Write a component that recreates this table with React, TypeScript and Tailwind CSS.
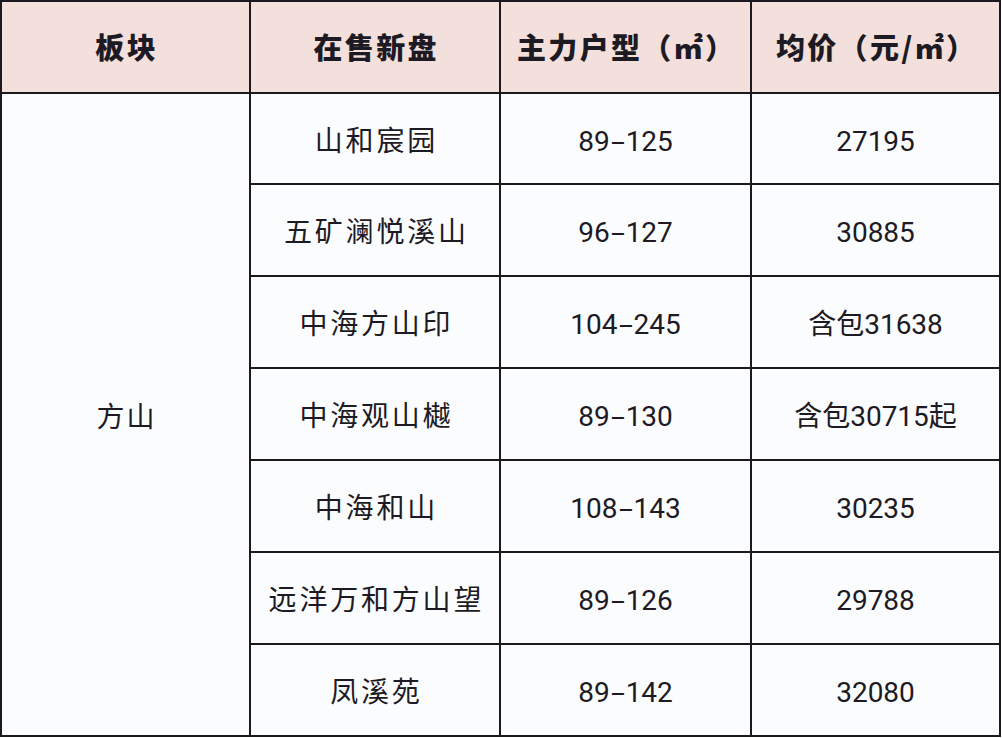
import React from "react";

const rows = [
  { name: "山和宸园", area: "89-125", price: "27195" },
  { name: "五矿澜悦溪山", area: "96-127", price: "30885" },
  { name: "中海方山印", area: "104-245", price: "含包31638" },
  { name: "中海观山樾", area: "89-130", price: "含包30715起" },
  { name: "中海和山", area: "108-143", price: "30235" },
  { name: "远洋万和方山望", area: "89-126", price: "29788" },
  { name: "凤溪苑", area: "89-142", price: "32080" },
];

const headers = ["板块", "在售新盘", "主力户型（㎡）", "均价（元/㎡）"];

const Range = ({ value }: { value: string }) => {
  const [a, b] = value.split("-");
  return (
    <span>
      {a}
      <span className="inline-block w-[16px] scale-x-[1.8] text-center">-</span>
      {b}
    </span>
  );
};

const App = () => {
  return (
    <div
      className="h-[738px] w-[1002px] bg-white"
      style={{ fontFamily: '"Noto Sans CJK SC", "Noto Sans", sans-serif' }}
    >
      <div className="grid w-[1001px] grid-cols-[247px_248px_249px_247px] grid-rows-[90px_89px_90px_90px_90px_90px_90px_90px] gap-[2px] bg-[#1b1820] p-[2px] text-[#1d1a24]">
        {headers.map((h) => (
          <div
            key={h}
            className="flex items-center justify-center whitespace-nowrap bg-[#f3dfdb] pl-[0.08em] text-[29px] font-black tracking-[0.08em]"
          >
            {h}
          </div>
        ))}

        <div className="row-span-7 flex items-center justify-center bg-[#fbfcfe] pl-[0.08em] text-[28px] tracking-[0.08em]">
          方山
        </div>

        {rows.map((r) => (
          <React.Fragment key={r.name}>
            <div className="flex items-center justify-center whitespace-nowrap bg-[#fbfcfe] pl-[0.1em] text-[28px] tracking-[0.1em]">
              {r.name}
            </div>
            <div
              className="flex items-center justify-center bg-[#fbfcfe] pt-[6px] text-[28px]"
              style={{ fontFamily: 'Roboto, "Noto Sans CJK SC", sans-serif' }}
            >
              <Range value={r.area} />
            </div>
            <div
              className="flex items-center justify-center bg-[#fbfcfe] pt-[6px] text-[28px]"
              style={{ fontFamily: 'Roboto, "Noto Sans CJK SC", sans-serif' }}
            >
              {r.price}
            </div>
          </React.Fragment>
        ))}
      </div>
    </div>
  );
};

export default App;
